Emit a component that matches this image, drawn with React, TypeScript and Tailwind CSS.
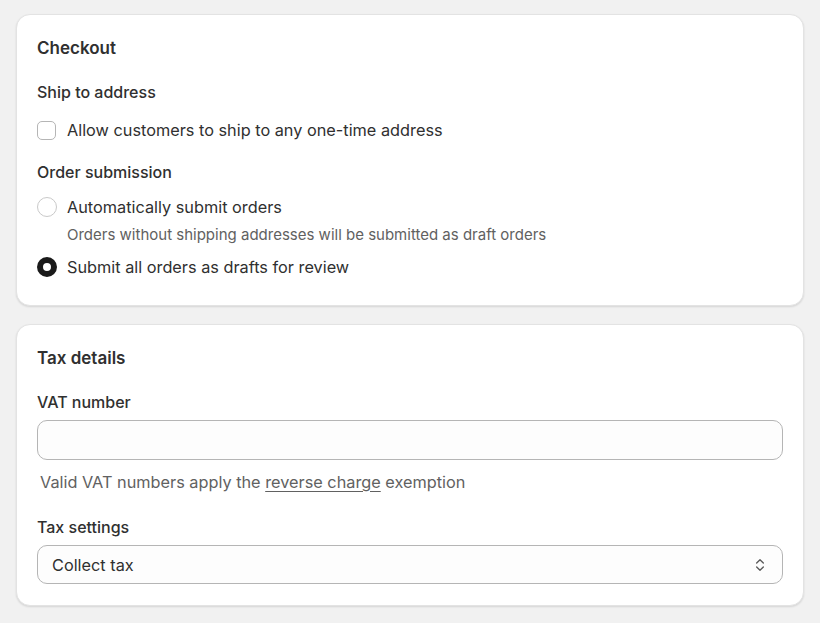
import { ChevronsUpDown } from "lucide-react";

function Radio({ checked }: { checked?: boolean }) {
  return checked ? (
    <span className="box-border size-[20px] shrink-0 rounded-full border-[6px] border-[#1a1a1a] bg-white" />
  ) : (
    <span className="box-border size-[20px] shrink-0 rounded-full border border-[#c9c9c9] bg-white" />
  );
}

export default function App() {
  return (
    <div className="min-h-[623px] bg-[#f1f1f1] px-[16px] pt-[14px] font-['Inter',sans-serif] text-[#303030]">
      {/* Checkout */}
      <section className="h-[292px] rounded-[14px] border border-[#e3e3e3] bg-white px-[20px] pt-[22px] shadow-[0_1px_2px_rgba(0,0,0,0.12)]">
        <h2 className="text-[17px] font-semibold leading-[22px]">Checkout</h2>

        <h3 className="mt-[22px] text-[16px] font-medium leading-[22px]">Ship to address</h3>
        <label className="mt-[16px] flex items-center gap-[11px]">
          <span className="box-border size-[19px] shrink-0 rounded-[5px] border border-[#b5b5b5] bg-white" />
          <span className="text-[16.3px] leading-[22px]">Allow customers to ship to any one-time address</span>
        </label>

        <h3 className="mt-[20px] text-[16px] font-medium leading-[22px]">Order submission</h3>
        <div className="mt-[13px] flex items-center gap-[10px]">
          <Radio />
          <span className="text-[16.3px] leading-[22px]">Automatically submit orders</span>
        </div>
        <p className="ml-[30px] mt-[6px] text-[15px] leading-[22px] text-[#616161]">
          Orders without shipping addresses will be submitted as draft orders
        </p>
        <div className="mt-[10px] flex items-center gap-[10px]">
          <Radio checked />
          <span className="text-[16.3px] leading-[22px]">Submit all orders as drafts for review</span>
        </div>
      </section>

      {/* Tax details */}
      <section className="mt-[18px] h-[282px] rounded-[14px] border border-[#e3e3e3] bg-white px-[20px] pt-[22px] shadow-[0_1px_2px_rgba(0,0,0,0.12)]">
        <h2 className="text-[17px] font-semibold leading-[22px]">Tax details</h2>

        <div className="mt-[22px] text-[16px] font-medium leading-[22px]">VAT number</div>
        <div className="mt-[7px] h-[40px] rounded-[10px] border border-[#b5b5b5] bg-[#fdfdfd]" />
        <p className="ml-[3px] mt-[11px] text-[16.3px] leading-[22px] text-[#616161]">
          Valid VAT numbers apply the{" "}
          <span className="underline underline-offset-[3px]">reverse charge</span> exemption
        </p>

        <div className="mt-[23px] text-[16px] font-medium leading-[22px]">Tax settings</div>
        <div className="mt-[7px] flex h-[39px] items-center justify-between rounded-[10px] border border-[#b5b5b5] bg-[#fdfdfd] pl-[14px] pr-[14px]">
          <span className="text-[16.3px] leading-[22px]">Collect tax</span>
          <ChevronsUpDown className="size-[16px] text-[#5a5a5a]" strokeWidth={2} />
        </div>
      </section>
    </div>
  );
}
